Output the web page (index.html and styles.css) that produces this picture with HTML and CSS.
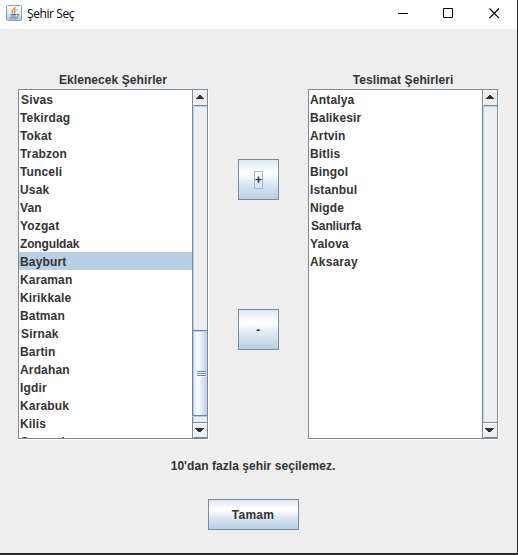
FILE: index.html
```
<!DOCTYPE html>
<html lang="tr">
<head>
<meta charset="utf-8">
<title>Şehir Seç</title>
<link rel="stylesheet" href="styles.css">
</head>
<body>
<div class="window">
  <header class="titlebar">
    <svg class="app-icon" width="16" height="16" viewBox="0 0 16 16">
      <defs><linearGradient id="ig" x1="0" y1="0" x2="0" y2="1"><stop offset="0" stop-color="#fafafa"/><stop offset=".5" stop-color="#e6eef3"/><stop offset="1" stop-color="#a9c0cf"/></linearGradient></defs>
      <rect x=".5" y=".5" width="15" height="15" rx="1" fill="url(#ig)" stroke="#8da2b0"/>
      <path d="M9.2 2C9.4 4 5.6 4.900 6 6.600Q6.300 7.600 7.600 8.400M10.600 4.500C8.200 5.400 8 6 8.800 7Q9.300 7.800 8.300 8.500" fill="none" stroke="#e5882f" stroke-width="1.200"/>
      <path d="M4.500 9.500H10.500M5 11H10M3.500 13H11.500M11 9.300Q13.500 9 12.500 10.600 12 11.300 10.800 11.500" fill="none" stroke="#54809f" stroke-width="1"/>
    </svg>
    <h1 class="title">Şehir Seç</h1>
    <div class="controls">
      <svg width="46" height="29" viewBox="0 0 46 29"><path d="M18 13.500H28" stroke="#000"/></svg>
      <svg width="46" height="29" viewBox="0 0 46 29"><path d="M17.500 8.500H26.500V17.500H17.500Z" fill="none" stroke="#000"/></svg>
      <svg width="46" height="29" viewBox="0 0 46 29"><path d="M17.500 8.500L27 18M27 8.500L17.500 18" stroke="#000" stroke-width="1.100"/></svg>
    </div>
  </header>
  <main class="content">
    <section class="column">
      <h2 class="heading">Eklenecek Şehirler</h2>
      <div class="listbox">
        <ul class="items">
          <li class="inset">Sivas</li><li>Tekirdag</li><li>Tokat</li><li>Trabzon</li><li>Tunceli</li><li>Usak</li><li>Van</li><li>Yozgat</li><li class="tight">Zonguldak</li><li class="selected">Bayburt</li><li>Karaman</li><li>Kirikkale</li><li>Batman</li><li class="inset">Sirnak</li><li>Bartin</li><li>Ardahan</li><li>Igdir</li><li>Karabuk</li><li>Kilis</li><li>Osmaniye</li>
        </ul>
        <div class="scrollbar">
          <div class="arrow up"><svg width="8" height="4" viewBox="0 0 8 4" shape-rendering="crispEdges"><path d="M3 0H5V1H6V2H7V3H8V4H0V3H1V2H2V1H3Z"/></svg></div>
          <div class="track"><div class="thumb"><i></i><i></i><i></i></div></div>
          <div class="arrow down"><svg width="9" height="4" viewBox="0 0 9 4" shape-rendering="crispEdges"><path d="M0 0H9V1H8V2H7V3H6V4H3V3H2V2H1V1H0Z"/></svg></div>
        </div>
      </div>
    </section>
    <div class="transfer">
      <button class="btn square"><span class="focus">+</span></button>
      <button class="btn square">-</button>
    </div>
    <section class="column">
      <h2 class="heading">Teslimat Şehirleri</h2>
      <div class="listbox">
        <ul class="items">
          <li>Antalya</li><li>Balikesir</li><li>Artvin</li><li>Bitlis</li><li>Bingol</li><li>Istanbul</li><li>Nigde</li><li class="inset tight">Sanliurfa</li><li>Yalova</li><li>Aksaray</li>
        </ul>
        <div class="scrollbar">
          <div class="arrow up"><svg width="8" height="4" viewBox="0 0 8 4" shape-rendering="crispEdges"><path d="M3 0H5V1H6V2H7V3H8V4H0V3H1V2H2V1H3Z"/></svg></div>
          <div class="track"></div>
          <div class="arrow down"><svg width="9" height="4" viewBox="0 0 9 4" shape-rendering="crispEdges"><path d="M0 0H9V1H8V2H7V3H6V4H3V3H2V2H1V1H0Z"/></svg></div>
        </div>
      </div>
    </section>
  </main>
  <footer class="footer">
    <p class="message">10'dan fazla şehir seçilemez.</p>
    <button class="btn ok">Tamam</button>
  </footer>
</div>
</body>
</html>
```

FILE: styles.css
```
* { box-sizing: border-box; margin: 0; padding: 0; }
body { width: 518px; height: 555px; overflow: hidden; background: #2b2a2c; font: bold 12px/18px "Liberation Sans", Arial, sans-serif; color: #333; }
.window { width: 517px; height: 553px; background: #eee; }
.titlebar { display: flex; height: 29px; background: #fff; }
.app-icon { margin: 5px 5px 0 6px; }
.title { font: 12px/27px "Open Sans", "Noto Sans", sans-serif; color: #000; letter-spacing: -.4px; }
.controls { display: flex; margin-left: auto; margin-right: -1px; }
.content { display: flex; padding: 42px 0 0 18px; }
.column { width: 190px; }
.heading { height: 18px; font-size: 12px; line-height: 18px; text-align: center; letter-spacing: .08px; white-space: nowrap; }
.listbox { display: flex; height: 350px; border: 1px solid #7a8a99; border-right: 0; background: #fff; box-shadow: 1px 1px #fff; }
.items { flex: 1; height: 348px; overflow: hidden; list-style: none; letter-spacing: .15px; }
.items li { height: 18px; padding: 1px 0 0 1px; line-height: 18px; white-space: nowrap; }
.items .inset { padding-left: 2px; }
.items .tight { letter-spacing: -.15px; }
.items .selected { background: #b8cfe5; }
.scrollbar { display: flex; flex-direction: column; width: 16px; border: solid #7a8a99; border-width: 0 1px; background: #eee; }
.arrow { display: flex; justify-content: center; height: 16px; border-left: 1px solid #fff; border-top: 1px solid #fff; fill: #333; }
.up { border-bottom: 1px solid #7a8a99; padding: 4px 1px 0 0; }
.down { height: 15px; padding: 4px 2px 0 0; border-bottom: 1px solid #7a8a99; }
.track { display: flex; flex: 1; flex-direction: column; justify-content: flex-end; border: solid #b8cfe5; border-width: 1px 0 0 1px; box-shadow: 0 1px #7a8a99; margin-bottom: 1px; }
.thumb { display: flex; flex-direction: column; align-items: center; gap: 1px; height: 86px; margin: 0 0 6px -2px; padding-top: 40px; border: solid #6382bf; border-width: 1px 0 1px 1px; background: linear-gradient(90deg, #b8cfe5 0 1px, #dde8f3 1px, #fff 5px, #dde8f3 9px, #b8cfe5); box-shadow: 0 1px #b8cfe5, inset 0 1px #c8d9ee; }
.thumb i { width: 9px; height: 2px; margin-left: 2px; border-top: 1px solid #6382bf; border-bottom: 1px solid #fff; margin-bottom: -1px; }
.transfer { display: flex; flex-direction: column; gap: 109px; padding: 88px 29px 0 30px; }
.btn { font: bold 12px/16px "Liberation Sans", Arial, sans-serif; color: #333; border: 1px solid #7a8a99; background: linear-gradient(#dde8f3, #fff 30%, #fff 34%, #dde8f3 60%, #b8cfe5); letter-spacing: .3px; }
.square { display: flex; align-items: center; justify-content: center; width: 41px; height: 41px; }
.focus { width: 9px; height: 18px; border: 1px solid #a3b8cc; line-height: 17px; letter-spacing: 0; }
.footer { display: flex; flex-direction: column; align-items: center; padding-right: 11px; }
.message { height: 18px; margin-top: 18px; letter-spacing: .06px; }
.ok { width: 91px; height: 31px; margin-top: 24px; }
/* grip lines sit two pixels apart */
.thumb i + i { margin-top: 0; }
.thumb { gap: 1px; }
```
